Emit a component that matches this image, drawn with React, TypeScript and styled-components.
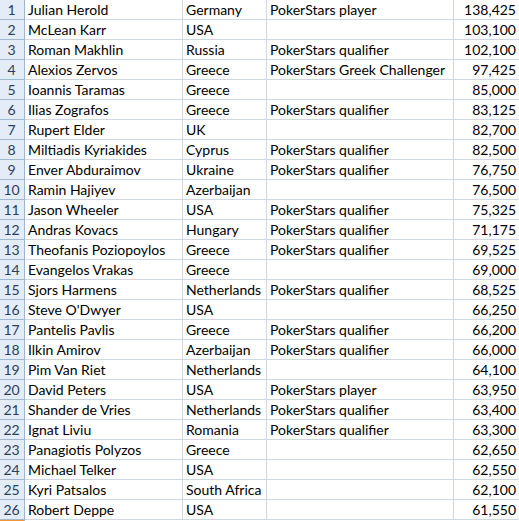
import React from "react";
import styled, { createGlobalStyle } from "styled-components";

const Global = createGlobalStyle`
  html, body { margin: 0; padding: 0; background: #ffffff; overflow: hidden; }
  body { font-family: "Lato", "Liberation Sans", sans-serif; }
`;

type Row = [string, string, string, string];

const rows: Row[] = [
  ["Julian Herold", "Germany", "PokerStars player", "138,425"],
  ["McLean Karr", "USA", "", "103,100"],
  ["Roman Makhlin", "Russia", "PokerStars qualifier", "102,100"],
  ["Alexios Zervos", "Greece", "PokerStars Greek Challenger", "97,425"],
  ["Ioannis Taramas", "Greece", "", "85,000"],
  ["Ilias Zografos", "Greece", "PokerStars qualifier", "83,125"],
  ["Rupert Elder", "UK", "", "82,700"],
  ["Miltiadis Kyriakides", "Cyprus", "PokerStars qualifier", "82,500"],
  ["Enver Abduraimov", "Ukraine", "PokerStars qualifier", "76,750"],
  ["Ramin Hajiyev", "Azerbaijan", "", "76,500"],
  ["Jason Wheeler", "USA", "PokerStars qualifier", "75,325"],
  ["Andras Kovacs", "Hungary", "PokerStars qualifier", "71,175"],
  ["Theofanis Poziopoylos", "Greece", "PokerStars qualifier", "69,525"],
  ["Evangelos Vrakas", "Greece", "", "69,000"],
  ["Sjors Harmens", "Netherlands", "PokerStars qualifier", "68,525"],
  ["Steve O'Dwyer", "USA", "", "66,250"],
  ["Pantelis Pavlis", "Greece", "PokerStars qualifier", "66,200"],
  ["Ilkin Amirov", "Azerbaijan", "PokerStars qualifier", "66,000"],
  ["Pim Van Riet", "Netherlands", "", "64,100"],
  ["David Peters", "USA", "PokerStars player", "63,950"],
  ["Shander de Vries", "Netherlands", "PokerStars qualifier", "63,400"],
  ["Ignat Liviu", "Romania", "PokerStars qualifier", "63,300"],
  ["Panagiotis Polyzos", "Greece", "", "62,650"],
  ["Michael Telker", "USA", "", "62,550"],
  ["Kyri Patsalos", "South Africa", "", "62,100"],
  ["Robert Deppe", "USA", "", "61,550"],
];

const Sheet = styled.div`
  width: 519px;
  height: 521px;
  overflow: hidden;
  display: flex;
  flex-direction: column;
`;

const SheetRow = styled.div`
  display: grid;
  grid-template-columns: 25px 158px 84px 187px 66px;
  height: 20px;
  flex: none;
`;

const RowHeader = styled.div`
  background: #e4ecf7;
  border-right: 1px solid #9eb6ce;
  border-bottom: 1px solid #9eb6ce;
  color: #27415f;
  font-size: 14px;
  line-height: 19px;
  text-align: center;
  box-sizing: border-box;
  padding-right: 1px;
`;

const Cell = styled.div<{ $num?: boolean }>`
  border-right: 1px solid #d0d7e5;
  border-bottom: 1px solid #d0d7e5;
  box-sizing: border-box;
  color: #000000;
  font-size: 14px;
  line-height: 19px;
  white-space: nowrap;
  overflow: visible;
  padding: ${(p) => (p.$num ? "0 3px 0 0" : "0 3px")};
  text-align: ${(p) => (p.$num ? "right" : "left")};
`;

const Tail = styled.div`
  display: grid;
  grid-template-columns: 25px 1fr;
  height: 1px;
`;

const TailHeader = styled.div`
  background: #f29536;
  border-right: 1px solid #9eb6ce;
  box-sizing: border-box;
`;

export default function App() {
  return (
    <>
      <Global />
      <Sheet>
        {rows.map((r, i) => (
          <SheetRow key={i}>
            <RowHeader>{i + 1}</RowHeader>
            <Cell>{r[0]}</Cell>
            <Cell>{r[1]}</Cell>
            <Cell>{r[2]}</Cell>
            <Cell $num>{r[3]}</Cell>
          </SheetRow>
        ))}
        <Tail>
          <TailHeader />
          <div />
        </Tail>
      </Sheet>
    </>
  );
}
